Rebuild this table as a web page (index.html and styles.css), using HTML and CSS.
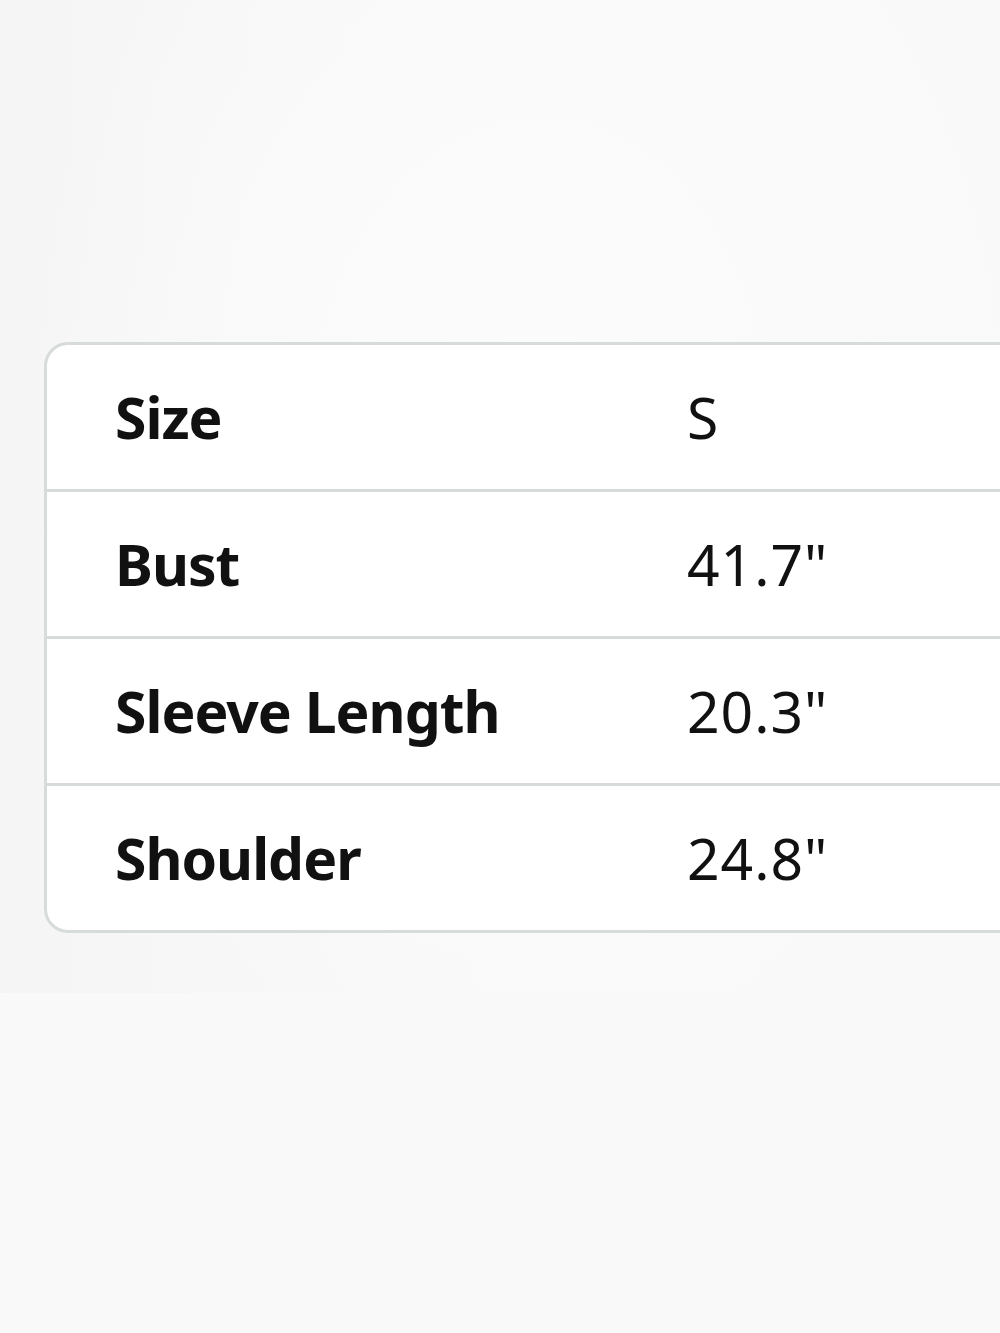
FILE: index.html
```html
<!DOCTYPE html>
<html lang="en">
<head>
<meta charset="utf-8">
<title>Size chart</title>
<link rel="stylesheet" href="styles.css">
</head>
<body>
<main class="page">
  <section class="stage">
    <div class="card">
      <div class="row"><div class="label">Size</div><div class="value">S</div></div>
      <div class="row"><div class="label">Bust</div><div class="value">41.7"</div></div>
      <div class="row"><div class="label">Sleeve Length</div><div class="value">20.3"</div></div>
      <div class="row"><div class="label">Shoulder</div><div class="value">24.8"</div></div>
    </div>
  </section>
  <section class="lower"></section>
</main>
</body>
</html>
```
FILE: styles.css
```css
html, body {
  margin: 0;
  padding: 0;
}
body {
  width: 1000px;
  height: 1333px;
  overflow: hidden;
  background: #f9f9f9;
  font-family: "Noto Sans", "Open Sans", sans-serif;
  color: #111111;
}
.page {
  display: flex;
  flex-direction: column;
  height: 1333px;
}
.stage {
  height: 993px;
  box-sizing: border-box;
  padding: 342px 0 0 44px;
  background:
    radial-gradient(ellipse 520px 700px at 540px 420px, #fcfcfc 0%, #fafafa 45%, rgba(247,247,247,0) 100%),
    linear-gradient(90deg, #f5f5f5 0px, #f7f7f7 200px, #f9f9f9 500px, #f9f9f9 100%);
}
.lower {
  flex: 1;
  background:
    radial-gradient(ellipse 180px 160px at 200px 1050px, #f4f4f4 0%, rgba(249,249,249,0) 100%),
    #f9f9f9;
}
.card {
  width: 1000px;
  background: #ffffff;
  border: 3px solid #d8dbdb;
  border-radius: 24px;
  overflow: hidden;
}
.row {
  display: grid;
  grid-template-columns: 572px 1fr;
  align-items: center;
  height: 144px;
  padding-left: 68px;
  border-bottom: 3px solid #d8dbdb;
}
.row:last-child {
  border-bottom: none;
}
.label {
  font-weight: 700;
  font-size: 57px;
  line-height: 1;
  letter-spacing: -1px;
}
.value {
  font-weight: 400;
  font-size: 57px;
  line-height: 1;
  letter-spacing: 1px;
}
```
